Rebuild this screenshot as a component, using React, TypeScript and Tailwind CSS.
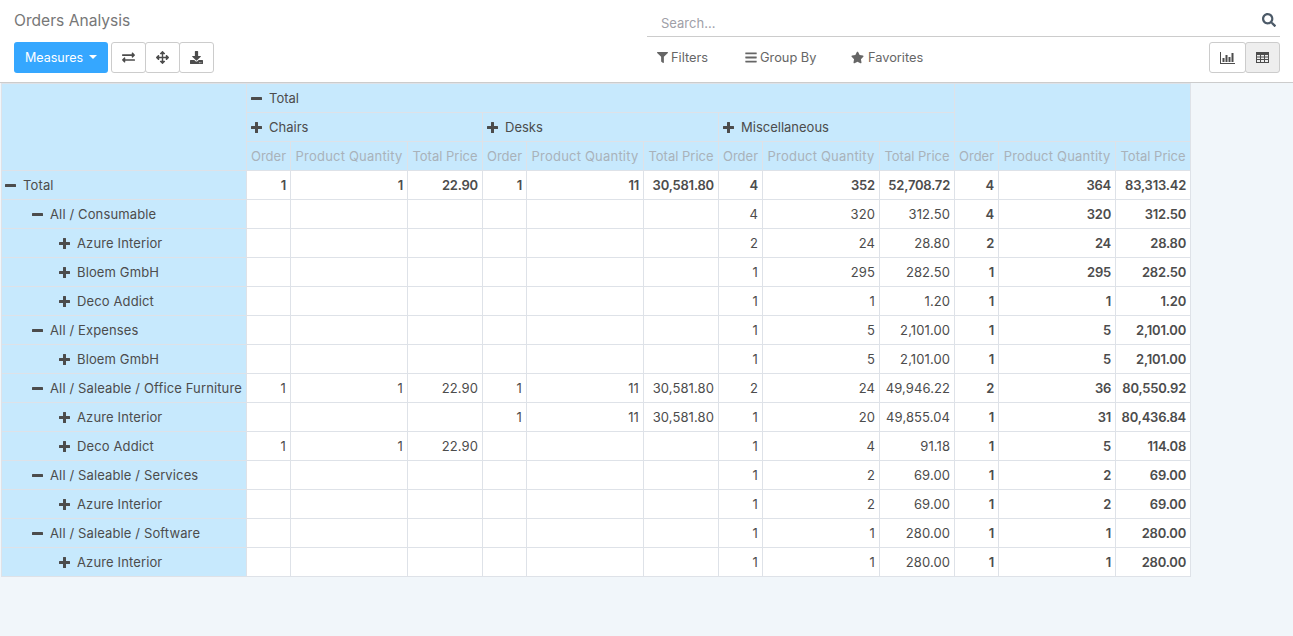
import React from 'react';
import { FaExchangeAlt, FaArrowsAlt, FaDownload, FaFilter, FaBars, FaStar, FaSearch } from 'react-icons/fa';

type Row = { label: string; depth: 0 | 1 | 2; open: boolean; cells: string[]; bold?: boolean };

const e = ['', '', ''];

const rows: Row[] = [
    { label: 'Total', depth: 0, open: true, bold: true, cells: ['1', '1', '22.90', '1', '11', '30,581.80', '4', '352', '52,708.72', '4', '364', '83,313.42'] },
    { label: 'All / Consumable', depth: 1, open: true, cells: [...e, ...e, '4', '320', '312.50', '4', '320', '312.50'] },
    { label: 'Azure Interior', depth: 2, open: false, cells: [...e, ...e, '2', '24', '28.80', '2', '24', '28.80'] },
    { label: 'Bloem GmbH', depth: 2, open: false, cells: [...e, ...e, '1', '295', '282.50', '1', '295', '282.50'] },
    { label: 'Deco Addict', depth: 2, open: false, cells: [...e, ...e, '1', '1', '1.20', '1', '1', '1.20'] },
    { label: 'All / Expenses', depth: 1, open: true, cells: [...e, ...e, '1', '5', '2,101.00', '1', '5', '2,101.00'] },
    { label: 'Bloem GmbH', depth: 2, open: false, cells: [...e, ...e, '1', '5', '2,101.00', '1', '5', '2,101.00'] },
    { label: 'All / Saleable / Office Furniture', depth: 1, open: true, cells: ['1', '1', '22.90', '1', '11', '30,581.80', '2', '24', '49,946.22', '2', '36', '80,550.92'] },
    { label: 'Azure Interior', depth: 2, open: false, cells: [...e, '1', '11', '30,581.80', '1', '20', '49,855.04', '1', '31', '80,436.84'] },
    { label: 'Deco Addict', depth: 2, open: false, cells: ['1', '1', '22.90', ...e, '1', '4', '91.18', '1', '5', '114.08'] },
    { label: 'All / Saleable / Services', depth: 1, open: true, cells: [...e, ...e, '1', '2', '69.00', '1', '2', '69.00'] },
    { label: 'Azure Interior', depth: 2, open: false, cells: [...e, ...e, '1', '2', '69.00', '1', '2', '69.00'] },
    { label: 'All / Saleable / Software', depth: 1, open: true, cells: [...e, ...e, '1', '1', '280.00', '1', '1', '280.00'] },
    { label: 'Azure Interior', depth: 2, open: false, cells: [...e, ...e, '1', '1', '280.00', '1', '1', '280.00'] },
];

const groups = ['Chairs', 'Desks', 'Miscellaneous'];
const measures = [0, 1, 2, 3];
const depthPad = ['pl-[3px]', 'pl-[30px]', 'pl-[57px]'];

// the stock plus/minus are too thin, the reference has the heavier ones
const Toggle = ({ open }: { open: boolean }) => (
    <svg viewBox="0 0 11 11" className="-mt-px w-[11px] h-[11px] mr-[7px] shrink-0 fill-[#4c4c4c]">
        {open ? (
            <rect x="0" y="4" width="11" height="3" rx="0.5" />
        ) : (
            <path d="M4 0.5a.5.5 0 0 1 .5-.5h2a.5.5 0 0 1 .5.5V4h3.5a.5.5 0 0 1 .5.5v2a.5.5 0 0 1-.5.5H7v3.5a.5.5 0 0 1-.5.5h-2a.5.5 0 0 1-.5-.5V7H.5A.5.5 0 0 1 0 6.500v-2A.5.5 0 0 1 .5 4H4z" />
        )}
    </svg>
);

const BarIcon = () => (
    <svg viewBox="0 0 15 12" className="w-[15px] h-[12px] fill-[#4c4c4c]">
        <rect x="0" y="0" width="1" height="12" />
        <rect x="0" y="11" width="15" height="1" />
        <rect x="2.500" y="6" width="2" height="4" />
        <rect x="5.500" y="3" width="2" height="7" />
        <rect x="8.500" y="5" width="2" height="5" />
        <rect x="11.500" y="1" width="2" height="9" />
    </svg>
);

const GridIcon = () => (
    <svg viewBox="0 0 13 11" className="w-[13px] h-[11px] fill-[#4c4c4c]">
        <path d="M0 0h13v11H0zM1 3v1.500h3V3zM5 3v1.500h3V3zM9 3v1.500h3V3zM1 5.500V7h3V5.500zM5 5.500V7h3V5.500zM9 5.500V7h3V5.500zM1 8v2h3V8zM5 8v2h3V8zM9 8v2h3V8z" fillRule="evenodd" />
    </svg>
);

const App: React.FC = () => {
    return (
        <div className="w-[1293px] h-[636px] overflow-hidden bg-[#f1f6fa] text-[#4c4c4c] text-[13px] font-['Inter','Liberation_Sans',sans-serif]">
            <div className="h-[83px] bg-white border-b border-[#ccc] flex justify-between pl-[14px] pr-[13px]">
                <div className="flex flex-col">
                    <h1 className="mt-[11px] h-[20px] leading-[20px] text-[15.6px] font-normal text-[#777]">Orders Analysis</h1>
                    <div className="mt-[11px] flex">
                        <button className="w-[94px] h-[31px] pt-[1px] bg-[#35a7ff] rounded-[3px] text-white text-[12.5px] flex items-center justify-center gap-[6px]">
                            Measures
                            <span className="-mt-[3px] border-x-[4px] border-x-transparent border-t-[4px] border-t-white" />
                        </button>
                        <div className="ml-[3px] flex">
                            <button className="w-[35px] h-[31px] bg-white border border-[#ccc] rounded-[3px] flex items-center justify-center"><FaExchangeAlt className="w-[13px] h-[13px]" /></button>
                            <button className="w-[35px] h-[31px] -ml-px bg-white border border-[#ccc] rounded-[3px] flex items-center justify-center"><FaArrowsAlt className="w-[13px] h-[13px]" /></button>
                            <button className="w-[35px] h-[31px] -ml-px bg-white border border-[#ccc] rounded-[3px] flex items-center justify-center"><FaDownload className="w-[13px] h-[13px]" /></button>
                        </div>
                    </div>
                </div>
                <div className="w-[633px] flex flex-col">
                    <div className="mt-[11px] h-[26px] border-b border-[#ccc] flex items-center justify-between pl-[14px] pr-[4px]">
                        <span className="text-[#a0a0a8]">Search...</span>
                        <FaSearch className="-mt-[8px] w-[14px] h-[14px] text-[#4c5a68]" />
                    </div>
                    <div className="flex justify-between mt-[5px]">
                        <div className="flex items-center h-[31px] pl-[10px] text-[#666] text-[12.8px]">
                            <span className="flex items-center gap-[3px] w-[88px]"><FaFilter className="w-[11px] h-[11px]" />Filters</span>
                            <span className="flex items-center gap-[3px] w-[106px]"><FaBars className="w-[12px] h-[13px]" />Group By</span>
                            <span className="flex items-center gap-[4px]"><FaStar className="-mt-px w-[13px] h-[13px]" />Favorites</span>
                        </div>
                        <div className="flex">
                            <button className="w-[37px] h-[31px] bg-white border border-[#ccc] rounded-[3px] flex items-center justify-center"><BarIcon /></button>
                            <button className="w-[35px] h-[31px] -ml-px bg-[#eee] border border-[#ccc] rounded-[3px] flex items-center justify-center"><GridIcon /></button>
                        </div>
                    </div>
                </div>
            </div>
            <table className="table-fixed border-collapse w-[1190px] ml-px [&_td]:border [&_td]:border-[#dee2e8] [&_th]:border [&_th]:border-[#dee2e8]">
                <colgroup>
                    <col className="w-[245px]" />
                    {measures.map((m) => (
                        <React.Fragment key={m}>
                            <col className="w-[44px]" />
                            <col className="w-[117px]" />
                            <col className="w-[75px]" />
                        </React.Fragment>
                    ))}
                </colgroup>
                <thead className="bg-[#c7e9fd]">
                    <tr className="h-[29px]">
                        <th rowSpan={3} />
                        <th colSpan={9} className="font-normal text-left pl-[4px] pt-[2px]">
                            <span className="flex items-center"><Toggle open />Total</span>
                        </th>
                        <th colSpan={3} rowSpan={2} />
                    </tr>
                    <tr className="h-[29px]">
                        {groups.map((g) => (
                            <th key={g} colSpan={3} className="font-normal text-left pl-[4px] pt-[2px]">
                                <span className="flex items-center"><Toggle open={false} />{g}</span>
                            </th>
                        ))}
                    </tr>
                    <tr className="h-[29px]">
                        {measures.map((m) => (
                            <React.Fragment key={m}>
                                <th className="font-normal text-[#a9b2ba] px-0 pt-[2px]">Order</th>
                                <th className="font-normal text-[#a9b2ba] px-0 pt-[2px] tracking-[0.2px] whitespace-nowrap">Product Quantity</th>
                                <th className="font-normal text-[#a9b2ba] px-0 pt-[2px] whitespace-nowrap">Total Price</th>
                            </React.Fragment>
                        ))}
                    </tr>
                </thead>
                <tbody>
                    {rows.map((row, i) => (
                        <tr key={i} className="h-[29px]">
                            <td className={`bg-[#c7e9fd] pt-[2px] tracking-[0.13px] whitespace-nowrap ${depthPad[row.depth]}`}>
                                <span className="flex items-center"><Toggle open={row.open} />{row.label}</span>
                            </td>
                            {row.cells.map((c, j) => (
                                <td key={j} className={`bg-white text-right pr-[4px] pt-[2px] ${row.bold || j >= 9 ? 'font-semibold tracking-[-0.2px]' : 'tracking-[0.1px]'}`}>{c}</td>
                            ))}
                        </tr>
                    ))}
                </tbody>
            </table>
        </div>
    );
};

export default App;
